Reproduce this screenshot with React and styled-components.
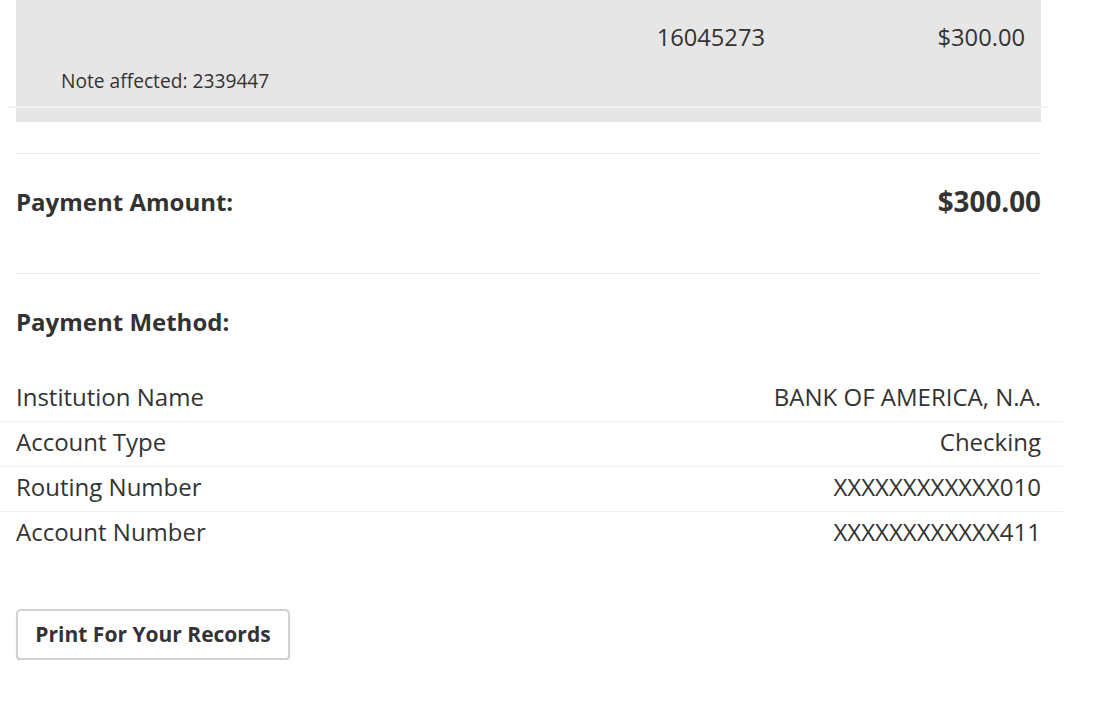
import React from "react";
import styled, { createGlobalStyle } from "styled-components";

const GlobalStyle = createGlobalStyle`
  body {
    margin: 0;
    background: #fff;
    font-family: "Open Sans", "Noto Sans", sans-serif;
    color: #333;
  }
`;

const Page = styled.div`
  width: 1025px;
  margin-left: 16px;
`;

const Panel = styled.div`
  background: #e6e6e6;
  height: 122px;
  margin-bottom: 31px;
  display: flex;
  flex-direction: column;
`;

const PanelRow = styled.div`
  display: grid;
  grid-template-columns: 1fr 150px 260px;
  padding: 21px 16px 0 0;
  font-size: 23.7px;
  line-height: 32px;
  height: 32px;
  & > span {
    text-align: right;
  }
`;

const Note = styled.div`
  font-size: 19.2px;
  line-height: 24px;
  padding: 16px 0 0 45px;
`;

const PanelRule = styled.div`
  height: 2px;
  background: #f2f2f2;
  margin: 13px -7px 0 -8px;
`;

const Rule = styled.hr`
  border: none;
  border-top: 1px solid #ececec;
  margin: 0;
`;

const AmountRow = styled.div`
  display: flex;
  justify-content: space-between;
  align-items: center;
  height: 32px;
  padding: 31px 0 56px;
  font-weight: 700;
`;

const AmountLabel = styled.span`
  font-size: 24px;
`;

const AmountValue = styled.span`
  font-size: 27.8px;
`;

const MethodHeading = styled.h3`
  margin: 0;
  padding-top: 32px;
  font-size: 24px;
  line-height: 32px;
  font-weight: 700;
`;

const Table = styled.div`
  margin: 39px -22px 0 -16px;
  padding-bottom: 52px;
`;

const DetailRow = styled.div`
  display: flex;
  justify-content: space-between;
  align-items: center;
  height: 39px;
  padding: 0 22px 5px 16px;
  font-size: 24px;
  border-bottom: 1px solid ${(p) => (p.$last ? "transparent" : "#efefef")};
`;

const PrintButton = styled.button`
  font-family: "Open Sans", sans-serif;
  font-weight: 700;
  font-size: 21px;
  line-height: 28px;
  color: #333;
  background: #fff;
  border: 2px solid #d2d2d2;
  border-radius: 5px;
  box-shadow: 0 1px 1px #c8c8c8;
  width: 274px;
  height: 51px;
  padding: 0 0 2px;
  cursor: pointer;
`;

const details = [
  ["Institution Name", "BANK OF AMERICA, N.A."],
  ["Account Type", "Checking"],
  ["Routing Number", "XXXXXXXXXXXX010"],
  ["Account Number", "XXXXXXXXXXXX411"],
];

export default function App() {
  return (
    <>
      <GlobalStyle />
      <Page>
        <Panel>
          <PanelRow>
            <span />
            <span>16045273</span>
            <span>$300.00</span>
          </PanelRow>
          <Note>Note affected: 2339447</Note>
          <PanelRule />
        </Panel>
        <Rule />
        <AmountRow>
          <AmountLabel>Payment Amount:</AmountLabel>
          <AmountValue>$300.00</AmountValue>
        </AmountRow>
        <Rule />
        <MethodHeading>Payment Method:</MethodHeading>
        <Table>
          {details.map(([label, value], i) => (
            <DetailRow key={label} $last={i === details.length - 1}>
              <span>{label}</span>
              <span>{value}</span>
            </DetailRow>
          ))}
        </Table>
        <PrintButton>Print For Your Records</PrintButton>
      </Page>
    </>
  );
}
